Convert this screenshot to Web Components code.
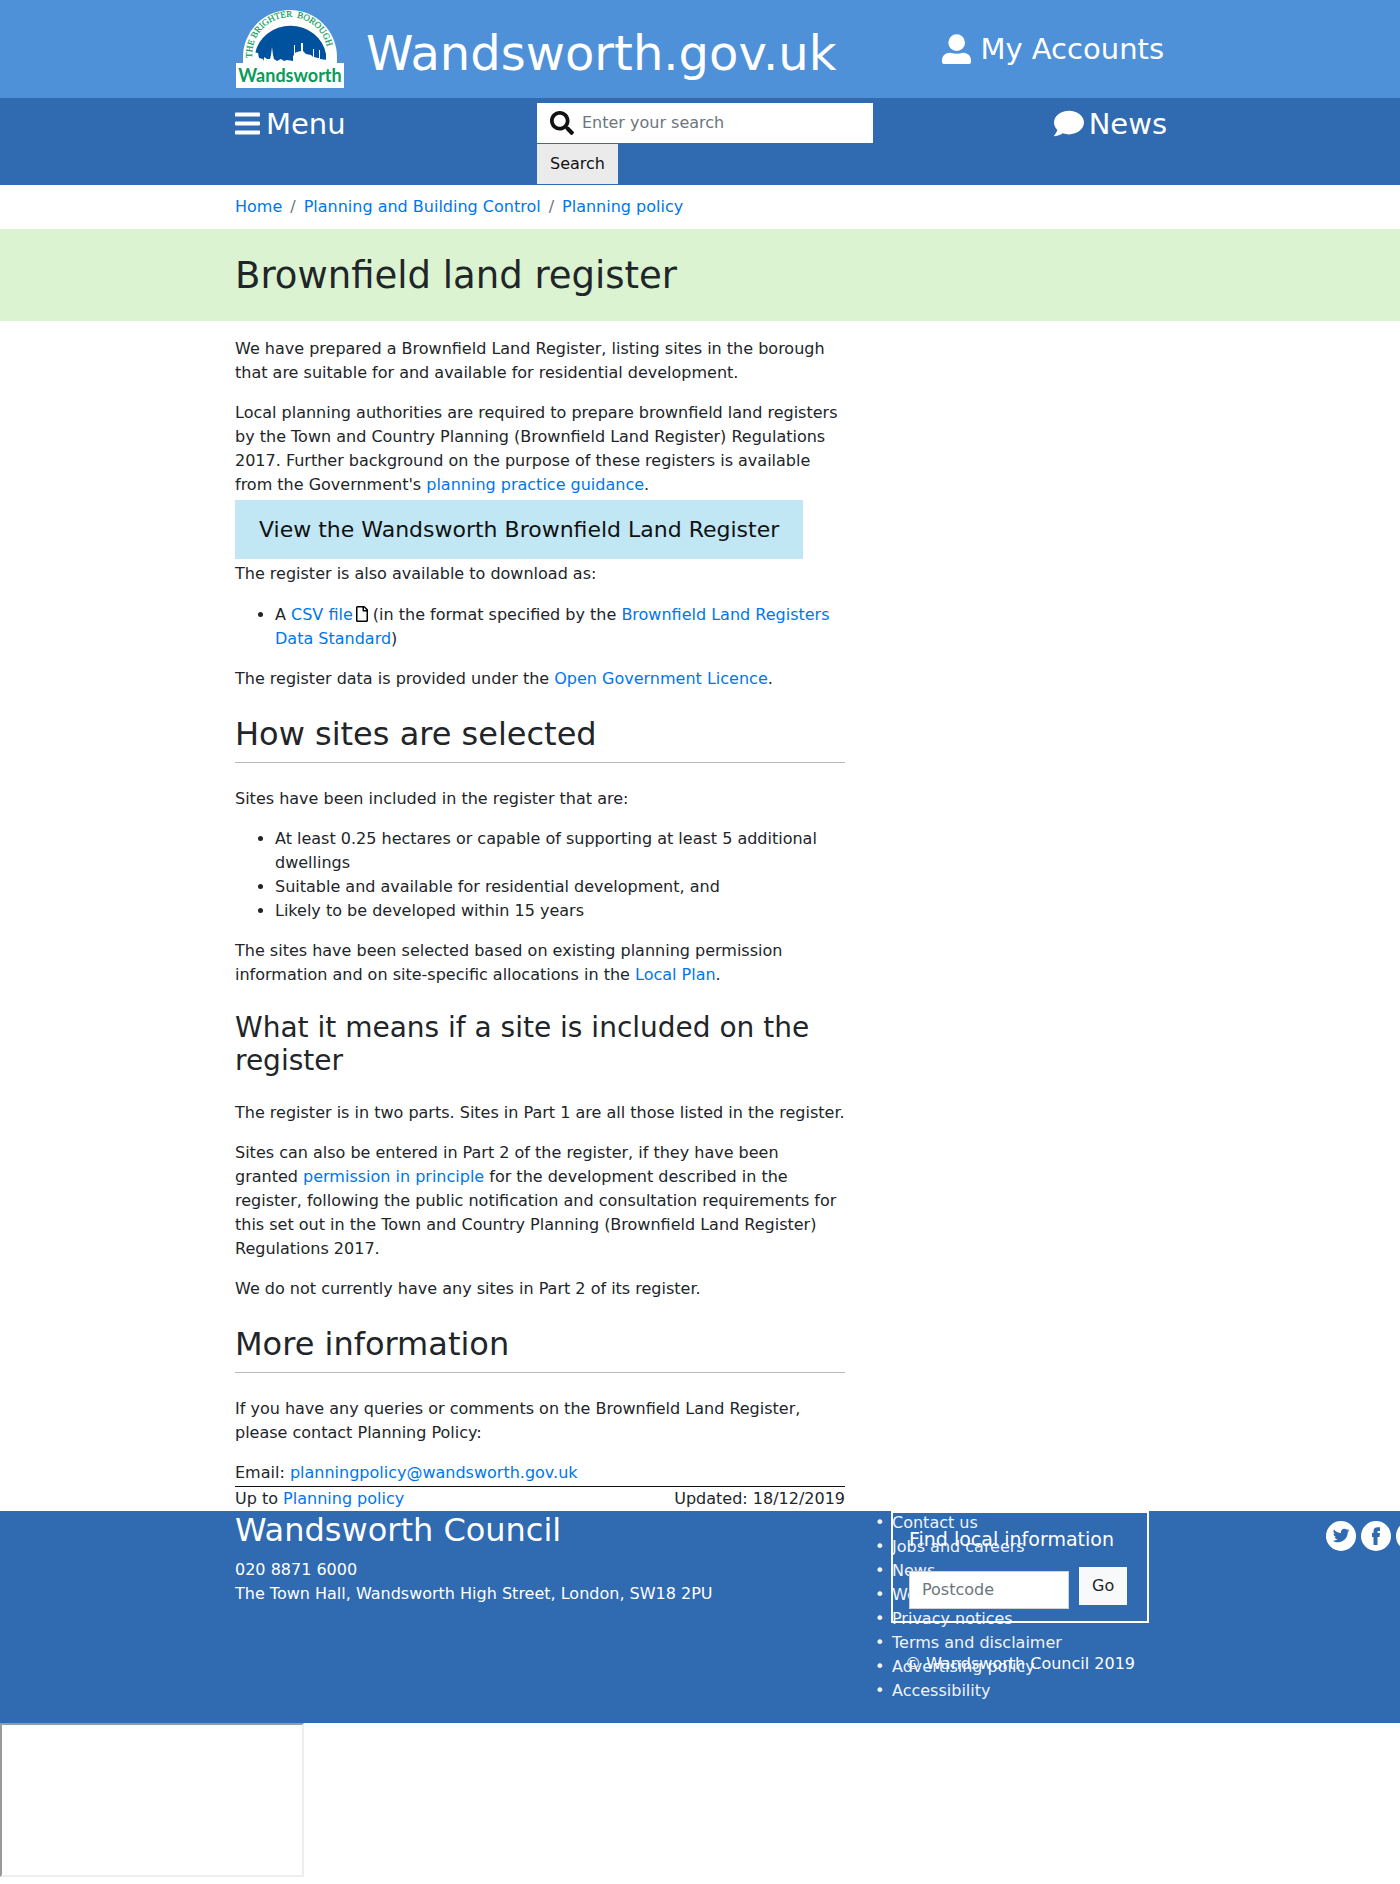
<!DOCTYPE html>
<html lang="en">
<head>
<meta charset="utf-8">
<meta name="viewport" content="width=device-width, initial-scale=1">
<title>Brownfield land register - Wandsworth Borough Council</title>
<style>
  body { margin: 0; background: #fff; color: #212529; font: 16px/24px "DejaVu Sans", sans-serif; overflow-x: hidden; }
</style>
</head>
<body>
<site-header></site-header>
<site-nav></site-nav>
<bread-crumb></bread-crumb>
<page-title>Brownfield land register</page-title>
<page-article></page-article>
<site-footer></site-footer>
<embed-frame></embed-frame>

<script>
const base = `
  * { box-sizing: border-box; }
  :host { display: block; }
  a { color: #0076ec; text-decoration: none; }
  .container { max-width: 960px; margin: 0 auto; padding: 0 15px; }
  svg { display: block; fill: currentColor; flex: none; }
  h1, h2, h3, p, ul, ol { margin: 0; font-weight: 400; }
  button, input { font: inherit; border: 0; border-radius: 0; margin: 0; }
  ::placeholder { color: #6c757d; opacity: 1; }
`;
function define(name, css, html) {
  customElements.define(name, class extends HTMLElement {
    constructor() {
      super();
      this.attachShadow({ mode: 'open' }).innerHTML = `<style>${base}${css}</style>${html}`;
    }
  });
}

define('council-logo', `
  :host { width: 108px; }
`, `
  <svg width="108" height="80" viewBox="0 0 108 80" role="img" aria-label="Wandsworth, the brighter borough">
    <path fill="#fff" d="M0 54H7V48A47 47 0 0 1 101 48V54H108V79H0Z"/>
    <path fill="#00529f" d="M19 53V45A36 34 0 0 1 90 45V53Z"/>
    <path fill="#fff" d="M17 55V43L22 44 23 49 27 50 28 52 28 48 31 50 34 50 35 46 36 38 37 46 38 50 41 52 45 50 48 52 51 51 57 52 57 47 58 46 58 36 59 36 59 44 61 43 65 42 65 34 67 34 67 42 70 45 75 46 77 48 77 40 78 40 78 48 82 49 83 49 83 41 84 41 84 50 91 51V55Z"/>
    <path id="arc" fill="none" d="M16 49V46A38 38 0 0 1 92 46V58"/>
    <text font-family="Liberation Serif, serif" font-size="9" font-weight="400" fill="#0a9b5a" stroke="#0a9b5a" stroke-width=".2"><textPath href="#arc">THE BRIGHTER&#160; BOROUGH</textPath></text>
    <text x="54" y="73" text-anchor="middle" font-family="Lato, sans-serif" font-size="18" font-weight="700" fill="#0a9b5a">Wandsworth</text>
  </svg>
`);

define('site-header', `
  :host { background: #4e91d8; color: #fff; }
  .container { display: flex; align-items: center; height: 98px; }
  a { color: inherit; }
  .title { font-size: 48px; line-height: 72px; margin-left: 22px; padding-top: 7px; }
  .logo { padding-left: 1px; }
  .account { display: flex; align-items: center; gap: 9px; margin-left: auto; padding-right: 1px; font-size: 29px; line-height: 43px; }
`, `
  <header class="container">
    <a class="logo" href="#"><council-logo></council-logo></a>
    <a class="title" href="#">Wandsworth.gov.uk</a>
    <a class="account" href="#">
      <svg width="29" height="30" viewBox="0 0 87 90" aria-hidden="true"><circle cx="44" cy="26" r="25"/><path d="M25 56Q34 59 44 59T63 56C79 57 87 66 87 79V84Q87 90 81 90H6Q0 90 0 84V79C0 66 9 56 25 56Z"/></svg>
      <span>My Accounts</span>
    </a>
  </header>
`);

define('site-nav', `
  :host { background: #306ab0; color: #fff; }
  .container { display: grid; grid-template-columns: 302fr 336fr 292fr; align-items: start; }
  a { display: flex; align-items: center; gap: 6px; color: inherit; font-size: 29px; line-height: 43px; padding-top: 3px; }
  a span { padding-top: 2px; }
  .news { justify-content: flex-end; gap: 5px; margin-right: -2px; }
  form { padding: 5px 0 1px; }
  label { display: flex; align-items: center; gap: 8px; height: 40px; padding: 0 13px; background: #fff; color: #111; }
  input { flex: 1; min-width: 0; height: 40px; padding: 0 0 1px; background: transparent; outline: 0; }
  button { display: block; height: 40px; margin-top: 1px; padding: 0 13px; background: #ebebeb; color: #111; }
`, `
  <nav class="container">
    <a href="#"><svg width="25" height="29" viewBox="0 0 448 512" aria-hidden="true"><path d="M16 132h416c8.837 0 16-7.163 16-16V76c0-8.837-7.163-16-16-16H16C7.163 60 0 67.163 0 76v40c0 8.837 7.163 16 16 16zm0 160h416c8.837 0 16-7.163 16-16v-40c0-8.837-7.163-16-16-16H16c-8.837 0-16 7.163-16 16v40c0 8.837 7.163 16 16 16zm0 160h416c8.837 0 16-7.163 16-16v-40c0-8.837-7.163-16-16-16H16c-8.837 0-16 7.163-16 16v40c0 8.837 7.163 16 16 16z"/></svg><span>Menu</span></a>
    <form onsubmit="return false">
      <label>
        <svg width="24" height="24" viewBox="0 0 512 512" role="img" aria-label="Search the site"><path d="M505 442.700L405.300 343c-4.500-4.500-10.600-7-17-7H372c27.600-35.300 44-79.700 44-128C416 93.100 322.900 0 208 0S0 93.100 0 208s93.100 208 208 208c48.300 0 92.700-16.400 128-44v16.300c0 6.400 2.500 12.500 7 17l99.700 99.700c9.400 9.400 24.600 9.400 33.900 0l28.300-28.300c9.400-9.400 9.400-24.600.1-34zM208 336c-70.700 0-128-57.200-128-128 0-70.700 57.200-128 128-128 70.700 0 128 57.200 128 128 0 70.700-57.200 128-128 128z"/></svg>
        <input type="text" placeholder="Enter your search">
      </label>
      <button>Search</button>
    </form>
    <a class="news" href="#"><svg width="30" height="29" viewBox="0 0 512 512" preserveAspectRatio="none" aria-hidden="true"><path d="M256 32C114.600 32 0 125.100 0 240c0 49.600 21.400 95 57 130.700C44.500 421.100 2.700 466 2.200 466.500c-2.200 2.300-2.800 5.700-1.500 8.700S4.800 480 8 480c66.300 0 116-31.800 140.600-51.400 32.700 12.300 69 19.400 107.400 19.400 141.400 0 256-93.100 256-208S397.400 32 256 32z"/></svg><span>News</span></a>
  </nav>
`);

define('bread-crumb', `
  ol { display: flex; flex-wrap: wrap; list-style: none; padding: 10px 0; }
  li + li::before { content: "/"; padding: 0 8px; color: #6c757d; }
`, `
  <nav class="container" aria-label="Breadcrumb">
    <ol><li><a href="#">Home</a></li><li><a href="#">Planning and Building Control</a></li><li><a href="#">Planning policy</a></li></ol>
  </nav>
`);

define('page-title', `
  :host { background: #dbf3d0; }
  h1 { font-size: 37px; line-height: 44px; padding: 25px 0 23px; }
`, `<div class="container"><h1><slot></slot></h1></div>`);

define('page-article', `
  .container { padding-top: 16px; }
  article, .meta { max-width: 610px; }
  p, ul { margin-bottom: 16px; }
  ul { padding-left: 40px; }
  h2 { font-size: 32px; line-height: 38px; margin: 24px 0 24px; padding-bottom: 9px; border-bottom: 1px solid #bbb; }
  h3 { font-size: 28px; line-height: 33px; margin: 24px 0; }
  .flush { margin-bottom: 0; }
  .cta { display: table; font-size: 22px; line-height: 33px; padding: 13px 24px; margin: 3px 0; background: #c1e7f4; color: #111; }
  .cta + p { margin-bottom: 17px; }
  .file { display: inline-block; color: #000; margin-left: 3px; vertical-align: -2px; }
  .meta { display: flex; justify-content: space-between; border-top: 1px solid #111; margin-top: 1px; }
`, `
  <main class="container">
    <article>
      <p>We have prepared a Brownfield Land Register, listing sites in the borough that are suitable for and available for residential development.</p>
      <p class="flush">Local planning authorities are required to prepare brownfield land registers by the Town and Country Planning (Brownfield Land Register) Regulations 2017. Further background on the purpose of these registers is available from the Government's <a href="#">planning practice guidance</a>.</p>
      <a class="cta" href="#">View the Wandsworth Brownfield Land Register</a>
      <p>The register is also available to download as:</p>
      <ul><li>A <a href="#">CSV file</a><svg class="file" width="12" height="16" viewBox="0 0 384 512" role="img" aria-label="CSV"><path d="M369.900 97.900L286 14C277 5 264.800-.1 252.100-.1H48C21.500 0 0 21.500 0 48v416c0 26.500 21.500 48 48 48h288c26.500 0 48-21.500 48-48V131.900c0-12.700-5.100-25-14.100-34zM332.100 128H256V51.900l76.100 76.100zM48 464V48h160v104c0 13.300 10.700 24 24 24h104v288H48z"/></svg> (in the format specified by the <a href="#">Brownfield Land Registers Data Standard</a>)</li></ul>
      <p>The register data is provided under the <a href="#">Open Government Licence</a>.</p>
      <h2>How sites are selected</h2>
      <p>Sites have been included in the register that are:</p>
      <ul>
        <li>At least 0.25 hectares or capable of supporting at least 5 additional dwellings</li>
        <li>Suitable and available for residential development, and</li>
        <li>Likely to be developed within 15 years</li>
      </ul>
      <p>The sites have been selected based on existing planning permission information and on site-specific allocations in the <a href="#">Local Plan</a>.</p>
      <h3>What it means if a site is included on the register</h3>
      <p>The register is in two parts. Sites in Part 1 are all those listed in the register.</p>
      <p>Sites can also be entered in Part 2 of the register, if they have been granted <a href="#">permission in principle</a> for the development described in the register, following the public notification and consultation requirements for this set out in the Town and Country Planning (Brownfield Land Register) Regulations 2017.</p>
      <p>We do not currently have any sites in Part 2 of its register.</p>
      <h2>More information</h2>
      <p>If you have any queries or comments on the Brownfield Land Register, please contact Planning Policy:</p>
      <p class="flush">Email: <a href="#">planningpolicy@wandsworth.gov.uk</a></p>
    </article>
    <div class="meta"><span>Up to <a href="#">Planning policy</a></span><span>Updated: 18/12/2019</span></div>
  </main>
`);

define('local-search', `
  :host { border: 2px solid #fff; padding: 15px 16px 12px; width: 258px; }
  h4 { margin: 0 0 16px; font-weight: 400; font-size: 19px; line-height: 23px; }
  form { display: flex; align-items: flex-start; gap: 10px; }
  input { width: 160px; height: 38px; margin-top: 4px; padding: 0 12px 1px; border: 1px solid #ced4da; background: #fff; }
  button { height: 38px; padding: 0 13px; background: #f8f9fa; color: #212529; }
`, `
  <h4>Find local information</h4>
  <form onsubmit="return false"><input type="text" aria-label="Postcode" placeholder="Postcode"><button>Go</button></form>
`);

define('site-footer', `
  :host { background: #306ab0; color: #fff; overflow: hidden; }
  a { color: inherit; }
  .container { display: grid; grid-template-columns: 640px 451px auto; }
  h2 { font-size: 32px; line-height: 38px; margin-bottom: 9px; }
  .stack { display: grid; justify-items: start; align-items: start; }
  .stack > * { grid-area: 1 / 1; }
  ul { list-style: none; padding: 0 0 20px; color: #f0f4f9; }
  .links li::before { content: "•"; display: inline-block; width: 17px; }
  .local { padding-left: 16px; text-align: center; }
  .local local-search { text-align: left; }
  .local p { padding-top: 29px; }
  .social { display: flex; gap: 5px; padding: 10px 0 0; }
`, `
  <footer class="container">
    <div>
      <h2>Wandsworth Council</h2>
      <p>020 8871 6000</p>
      <p>The Town Hall, Wandsworth High Street, London, SW18 2PU</p>
    </div>
    <div class="stack">
      <ul class="links">
        <li><a href="#">Contact us</a></li><li><a href="#">Jobs and careers</a></li><li><a href="#">News</a></li><li><a href="#">Webcasts</a></li>
        <li><a href="#">Privacy notices</a></li><li><a href="#">Terms and disclaimer</a></li><li><a href="#">Advertising policy</a></li><li><a href="#">Accessibility</a></li>
      </ul>
      <div class="local"><local-search></local-search><p>© Wandsworth Council 2019</p></div>
    </div>
    <ul class="social">
      <li><a href="#" aria-label="Twitter"><svg width="30" height="30" viewBox="0 0 30 30"><circle cx="15" cy="15" r="15" fill="#fff"/><g transform="translate(6.800 6.200) scale(.0325)"><path fill="#306ab0" d="M459.370 151.716c.325 4.548.325 9.097.325 13.645 0 138.720-105.583 298.558-298.558 298.558-59.452 0-114.680-17.219-161.137-47.106 8.447.974 16.568 1.299 25.340 1.299 49.055 0 94.213-16.568 130.274-44.832-46.132-.975-84.792-31.188-98.112-72.772 6.498.974 12.995 1.624 19.818 1.624 9.421 0 18.843-1.300 27.614-3.573-48.081-9.747-84.143-51.980-84.143-102.985v-1.299c13.969 7.797 30.214 12.670 47.431 13.319-28.264-18.843-46.781-51.005-46.781-87.391 0-19.492 5.197-37.360 14.294-52.954 51.655 63.675 129.300 105.258 216.365 109.807-1.624-7.797-2.599-15.918-2.599-24.040 0-57.828 46.782-104.934 104.934-104.934 30.213 0 57.502 12.670 76.670 33.137 23.715-4.548 46.456-13.320 66.599-25.340-7.798 24.366-24.366 44.833-46.132 57.827 21.117-2.273 41.584-8.122 60.426-16.243-14.292 20.791-32.161 39.308-52.628 54.253z"/></g></svg></a></li>
      <li><a href="#" aria-label="Facebook"><svg width="30" height="30" viewBox="0 0 30 30"><circle cx="15" cy="15" r="15" fill="#fff"/><path fill="#306ab0" d="M12.500 24V16H11V12H12.500V10C12.500 7.500 14 6.300 16.500 6.300H19V10H17.500Q16.500 10 16.500 11V12H19L18.500 16H16.500V24Z"/></svg></a></li>
      <li><a href="#" aria-label="Instagram"><svg width="30" height="30" viewBox="0 0 30 30"><circle cx="15" cy="15" r="15" fill="#fff"/></svg></a></li>
    </ul>
  </footer>
`);

define('embed-frame', `
  :host { padding-bottom: 7px; }
  iframe { display: block; width: 304px; height: 154px; border: 2px inset #eee; }
`, `<iframe title="Embedded content"></iframe>`);
</script>
</body>
</html>
